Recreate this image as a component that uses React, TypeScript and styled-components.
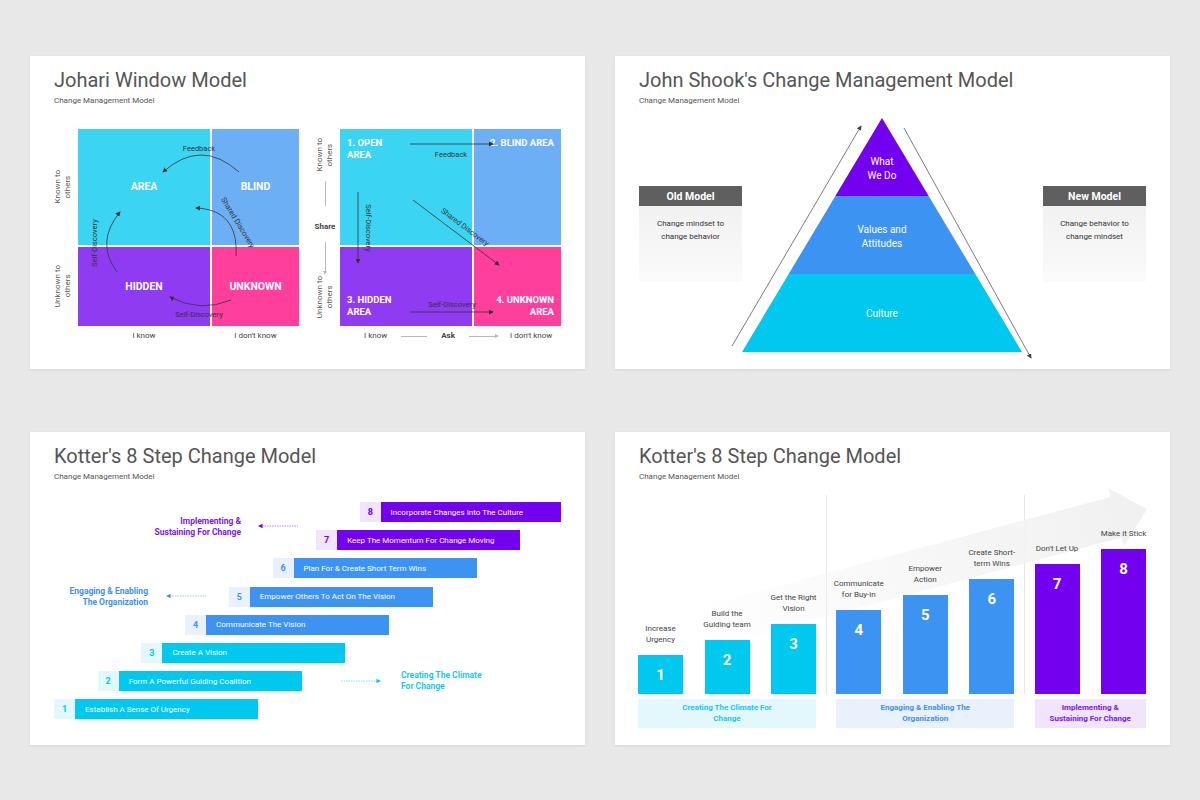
import { Fragment } from 'react';
import styled, { createGlobalStyle, css } from 'styled-components';

type Tone = 'cyan' | 'blue' | 'purple';

const tones: Record<Tone, { main: string; tint: string; text: string }> = {
  cyan: { main: '#00c8ef', tint: '#e3f8fd', text: '#1bc5ee' },
  blue: { main: '#3d93f2', tint: '#e8f1fc', text: '#3d8ff0' },
  purple: { main: '#7300ee', tint: '#f0e5fd', text: '#7a14f0' },
};

const GlobalStyle = createGlobalStyle`
  body {
    margin: 0;
    background: #e9e8e9;
    font-family: Roboto, 'Liberation Sans', sans-serif;
  }
`;

const Page = styled.div`
  width: 1200px;
  height: 800px;
  box-sizing: border-box;
  padding: 56px 30px 0;
  display: grid;
  grid-template-columns: 555px 555px;
  grid-template-rows: 313px 313px;
  column-gap: 30px;
  row-gap: 63px;
`;

const Slide = styled.section`
  position: relative;
  box-sizing: border-box;
  padding: 12px 24px 0;
  background: #fff;
  box-shadow: 0 1px 3px rgba(0, 0, 0, 0.08);
  overflow: hidden;
`;

const Title = styled.h1`
  margin: 0;
  font-size: 20px;
  line-height: 24px;
  font-weight: 400;
  color: #555;
  white-space: nowrap;
`;

const Subtitle = styled.p`
  margin: 4px 0 0;
  font-size: 8px;
  line-height: 10px;
  color: #555;
`;

/* ---------- Johari ---------- */

const Diagrams = styled.div`
  display: flex;
  gap: 11px;
  margin: 23px 0 0 -6px;
`;

const Johari = styled.div`
  display: flex;
  flex-direction: column;
`;

const JohariTop = styled.div`
  display: flex;
`;

const AxisCol = styled.div`
  width: 30px;
  display: flex;
  flex-direction: column;
  gap: 2px;
`;

const AxisCell = styled.div<{ $h: number }>`
  height: ${p => p.$h}px;
  display: flex;
  align-items: center;
  justify-content: center;
`;

const AxisStack = styled.div`
  width: 30px;
  box-sizing: border-box;
  padding-top: 9px;
  display: flex;
  flex-direction: column;
  align-items: center;
`;

const VText = styled.span<{ $mt?: number }>`
  margin-top: ${p => p.$mt ?? 0}px;
  writing-mode: vertical-rl;
  transform: rotate(180deg);
  font-size: 8px;
  line-height: 10px;
  color: #555;
  text-align: center;
  white-space: pre-line;
`;

const AxisWord = styled.span<{ $mt?: number }>`
  margin-top: ${p => p.$mt ?? 0}px;
  font-size: 8px;
  line-height: 10px;
  font-weight: 700;
  color: #444;
`;

const Rule = styled.span<{ $len: number; $vertical?: boolean; $arrow?: boolean; $mt?: number }>`
  position: relative;
  display: block;
  flex: none;
  margin-top: ${p => p.$mt ?? 0}px;
  background: #b8b8b8;
  width: ${p => (p.$vertical ? 1 : p.$len)}px;
  height: ${p => (p.$vertical ? p.$len : 1)}px;
  ${p =>
    p.$arrow &&
    (p.$vertical
      ? css`
          &::after {
            content: '';
            position: absolute;
            left: -2px;
            bottom: -3px;
            border-left: 2.5px solid transparent;
            border-right: 2.5px solid transparent;
            border-top: 4px solid #b8b8b8;
          }
        `
      : css`
          &::after {
            content: '';
            position: absolute;
            right: -3px;
            top: -2px;
            border-top: 2.5px solid transparent;
            border-bottom: 2.5px solid transparent;
            border-left: 4px solid #b8b8b8;
          }
        `)}
`;

const CellGrid = styled.div`
  position: relative;
  display: grid;
  grid-template-columns: 132px 87px;
  grid-template-rows: 116px 79px;
  gap: 2px;
`;

type Place = 'center' | 'tl' | 'tr' | 'bl' | 'br';

const placeStyles: Record<Place, ReturnType<typeof css>> = {
  center: css`
    align-items: center;
    justify-content: center;
    font-size: 10.5px;
  `,
  tl: css`
    align-items: flex-start;
    justify-content: flex-start;
    padding: 8px 7px;
  `,
  tr: css`
    align-items: flex-start;
    justify-content: flex-end;
    padding: 8px 7px;
  `,
  bl: css`
    align-items: flex-end;
    justify-content: flex-start;
    padding: 8px 7px;
  `,
  br: css`
    align-items: flex-end;
    justify-content: flex-end;
    text-align: right;
    padding: 8px 7px;
  `,
};

const Cell = styled.div<{ $bg: string; $place: Place }>`
  box-sizing: border-box;
  display: flex;
  background: ${p => p.$bg};
  color: #fff;
  font-weight: 700;
  font-size: 9.5px;
  line-height: 12px;
  white-space: pre-line;
  ${p => placeStyles[p.$place]}
`;

const Overlay = styled.svg`
  position: absolute;
  left: 0;
  top: 0;
  width: 100%;
  height: 100%;
  overflow: visible;
  pointer-events: none;
  font-family: Roboto, 'Liberation Sans', sans-serif;
`;

const BottomGrid = styled.div`
  margin: 5px 0 0 30px;
  display: grid;
  grid-template-columns: 132px 87px;
  gap: 2px;
  font-size: 8px;
  line-height: 10px;
  color: #444;
  text-align: center;
`;

const BottomFlow = styled.div`
  margin: 5px 0 0 30px;
  padding-left: 24px;
  display: flex;
  align-items: center;
  gap: 14px;
  font-size: 8px;
  line-height: 10px;
  color: #444;
`;

const Bold = styled.span`
  font-weight: 700;
`;

const JC = { cyan: '#3bd5f3', blue: '#6daff5', purple: '#8e3bf2', pink: '#ff3f9b' };

const ArrowMarker = ({ id, color = '#333' }: { id: string; color?: string }) => (
  <marker
    id={id}
    viewBox="0 0 6 6"
    refX="5"
    refY="3"
    markerWidth="5"
    markerHeight="5"
    markerUnits="userSpaceOnUse"
    orient="auto"
  >
    <path d="M0,0 L6,3 L0,6 z" fill={color} />
  </marker>
);

const JohariClassic = () => (
  <Johari>
    <JohariTop>
      <AxisCol>
        <AxisCell $h={116}>
          <VText>{'Known to\nothers'}</VText>
        </AxisCell>
        <AxisCell $h={79}>
          <VText>{'Unknown to\nothers'}</VText>
        </AxisCell>
      </AxisCol>
      <CellGrid>
        <Cell $bg={JC.cyan} $place="center">AREA</Cell>
        <Cell $bg={JC.blue} $place="center">BLIND</Cell>
        <Cell $bg={JC.purple} $place="center">HIDDEN</Cell>
        <Cell $bg={JC.pink} $place="center">UNKNOWN</Cell>
        <Overlay viewBox="0 0 221 197">
          <defs>
            <ArrowMarker id="jh-a" />
          </defs>
          <g fill="none" stroke="#333" strokeWidth="0.8" markerEnd="url(#jh-a)">
            <path d="M161,43 Q123,9 85,43" />
            <path d="M158,127 C160,95 145,80 118,79" />
            <path d="M39,143 Q17,113 42,83" />
            <path d="M153,171 Q122,184 92,168" />
          </g>
          <g fontSize="7.5" fill="#333" textAnchor="middle">
            <text x="121" y="22">Feedback</text>
            <text x="160" y="96" transform="rotate(58.5 160 93.5)">Shared Discovery</text>
            <text x="16" y="117" transform="rotate(-90 16 114)">Self-Discovery</text>
            <text x="121" y="188">Self-Discovery</text>
          </g>
        </Overlay>
      </CellGrid>
    </JohariTop>
    <BottomGrid>
      <span>I know</span>
      <span>I don't know</span>
    </BottomGrid>
  </Johari>
);

const JohariNumbered = () => (
  <Johari>
    <JohariTop>
      <AxisStack>
        <VText>{'Known to\nothers'}</VText>
        <Rule $vertical $len={25} $mt={10} />
        <AxisWord $mt={16}>Share</AxisWord>
        <Rule $vertical $arrow $len={30} $mt={10} />
        <VText $mt={4}>{'Unknown to\nothers'}</VText>
      </AxisStack>
      <CellGrid>
        <Cell $bg={JC.cyan} $place="tl">{'1. OPEN\nAREA'}</Cell>
        <Cell $bg={JC.blue} $place="tr">2. BLIND AREA</Cell>
        <Cell $bg={JC.purple} $place="bl">{'3. HIDDEN\nAREA'}</Cell>
        <Cell $bg={JC.pink} $place="br">{'4. UNKNOWN\nAREA'}</Cell>
        <Overlay viewBox="0 0 221 197">
          <defs>
            <ArrowMarker id="jh-b" />
          </defs>
          <g fill="none" stroke="#333" strokeWidth="0.8" markerEnd="url(#jh-b)">
            <path d="M70,15 L153,15" />
            <path d="M18,63 L18,134" />
            <path d="M73,71 L159,136" />
            <path d="M70,183 L153,183" />
          </g>
          <g fontSize="7.5" fill="#333" textAnchor="middle">
            <text x="111" y="27.5">Feedback</text>
            <text x="28" y="101.5" transform="rotate(90 28 99)">Self-Discovery</text>
            <text x="125" y="100.5" transform="rotate(37 125 98)">Shared Discovery</text>
            <text x="112" y="177.5">Self-Discovery</text>
          </g>
        </Overlay>
      </CellGrid>
    </JohariTop>
    <BottomFlow>
      <span>I know</span>
      <Rule $len={26} />
      <Bold>Ask</Bold>
      <Rule $len={27} $arrow />
      <span>I don't know</span>
    </BottomFlow>
  </Johari>
);

/* ---------- Shook ---------- */

const ShookBody = styled.div`
  display: grid;
  grid-template-columns: 103px 1fr 103px;
  align-items: center;
`;

const ModelBox = styled.div`
  display: flex;
  flex-direction: column;
`;

const ModelHead = styled.div`
  height: 20px;
  background: #5f5f5f;
  color: #fff;
  font-size: 10.5px;
  font-weight: 700;
  display: flex;
  align-items: center;
  justify-content: center;
`;

const ModelText = styled.div`
  height: 76px;
  box-sizing: border-box;
  padding-top: 11px;
  background: linear-gradient(180deg, #f1f1f1 0%, #fbfbfb 100%);
  color: #333;
  font-size: 8px;
  line-height: 13px;
  text-align: center;
  white-space: pre-line;
`;

const PyramidSvg = styled.svg`
  display: block;
  margin-top: 4px;
  width: 301px;
  height: 252px;
  overflow: visible;
  font-family: Roboto, 'Liberation Sans', sans-serif;
`;

const Pyramid = () => (
  <PyramidSvg viewBox="0 0 301 252">
    <defs>
      <ArrowMarker id="py-a" color="#444" />
    </defs>
    <polygon points="140,8 186.67,86 93.33,86" fill="#7300ee" />
    <polygon points="93.33,86 186.67,86 233.33,164 46.67,164" fill="#3d93f2" />
    <polygon points="46.67,164 233.33,164 280,242 0,242" fill="#00c8ef" />
    <g fill="none" stroke="#444" strokeWidth="0.7" markerEnd="url(#py-a)">
      <path d="M-10,236 L119,16" />
      <path d="M162,18 L289,248" />
    </g>
    <g fill="#fff" fontSize="10" textAnchor="middle">
      <text x="140" y="54.5">What</text>
      <text x="140" y="68.5">We Do</text>
      <text x="140" y="122.5">Values and</text>
      <text x="140" y="136.5">Attitudes</text>
      <text x="140" y="206.5">Culture</text>
    </g>
  </PyramidSvg>
);

/* ---------- Kotter steps ---------- */

const Steps = styled.div`
  position: relative;
  margin-top: 20px;
  display: flex;
  flex-direction: column;
  gap: 8.2px;
`;

const StepRow = styled.div<{ $indent: number }>`
  display: flex;
  padding-left: ${p => p.$indent}px;
`;

const StepNum = styled.div<{ $tone: Tone }>`
  width: 21px;
  height: 20px;
  display: flex;
  align-items: center;
  justify-content: center;
  background: ${p => tones[p.$tone].tint};
  color: ${p => tones[p.$tone].main};
  font-size: 9px;
  font-weight: 700;
`;

const StepBar = styled.div<{ $tone: Tone }>`
  width: 183px;
  height: 20px;
  box-sizing: border-box;
  padding-left: 10px;
  display: flex;
  align-items: center;
  background: ${p => tones[p.$tone].main};
  color: #fff;
  font-size: 8px;
  white-space: nowrap;
`;

const Note = styled.div<{ $tone: Tone; $align: 'left' | 'right' }>`
  position: absolute;
  font-size: 8.5px;
  line-height: 10.5px;
  font-weight: 700;
  white-space: pre;
  color: ${p => tones[p.$tone].text};
  text-align: ${p => p.$align};
`;

const NoteArrow = styled.svg`
  position: absolute;
  width: 40px;
  height: 6px;
  overflow: visible;
`;

const stepData: { n: number; text: string; tone: Tone }[] = [
  { n: 8, text: 'Incorporate Changes Into The Culture', tone: 'purple' },
  { n: 7, text: 'Keep The Momentum For Change Moving', tone: 'purple' },
  { n: 6, text: 'Plan For & Create Short Term Wins', tone: 'blue' },
  { n: 5, text: 'Empower Others To Act On The Vision', tone: 'blue' },
  { n: 4, text: 'Communicate The Vision', tone: 'blue' },
  { n: 3, text: 'Create A Vision', tone: 'cyan' },
  { n: 2, text: 'Form A Powerful Guiding Coalition', tone: 'cyan' },
  { n: 1, text: 'Establish A Sense Of Urgency', tone: 'cyan' },
];

const DashArrow = ({ tone, left, top, dir }: { tone: Tone; left: number; top: number; dir: 'l' | 'r' }) => {
  const c = tones[tone].main;
  return (
    <NoteArrow viewBox="0 0 40 6" style={{ left, top }}>
      {dir === 'l' ? (
        <>
          <line x1="4" y1="3" x2="40" y2="3" stroke={c} strokeWidth="0.8" strokeDasharray="1.5 1" opacity="0.6" />
          <path d="M0,3 L4.5,0.8 L4.5,5.2 z" fill={c} />
        </>
      ) : (
        <>
          <line x1="0" y1="3" x2="36" y2="3" stroke={c} strokeWidth="0.8" strokeDasharray="1.5 1" opacity="0.6" />
          <path d="M40,3 L35.5,0.8 L35.5,5.2 z" fill={c} />
        </>
      )}
    </NoteArrow>
  );
};

/* ---------- Kotter chart ---------- */

const Chart = styled.div`
  position: relative;
  margin-top: 13px;
  margin-left: -1px;
  display: flex;
`;

const ChartBack = styled.svg`
  position: absolute;
  left: 0;
  top: 0;
  width: 510px;
  height: 200px;
  overflow: visible;
  z-index: 0;
`;

const Group = styled.div`
  position: relative;
  z-index: 1;
  display: flex;
  flex-direction: column;
`;

const BarsRow = styled.div`
  height: 199px;
  display: flex;
  align-items: flex-end;
  gap: 21.5px;
`;

const BarCol = styled.div`
  width: 45px;
  display: flex;
  flex-direction: column;
  align-items: center;
`;

const BarLabel = styled.div`
  margin-bottom: 10px;
  font-size: 8px;
  line-height: 10.5px;
  color: #444;
  text-align: center;
  white-space: pre;
`;

const Bar = styled.div<{ $tone: Tone }>`
  width: 45px;
  box-sizing: border-box;
  padding-top: 12px;
  background: ${p => tones[p.$tone].main};
  color: #fff;
  font-size: 15px;
  line-height: 16px;
  font-weight: 700;
  text-align: center;
`;

const GroupLabel = styled.div<{ $tone: Tone }>`
  margin-top: 5px;
  height: 29px;
  display: flex;
  align-items: center;
  justify-content: center;
  background: ${p => tones[p.$tone].tint};
  color: ${p => tones[p.$tone].text};
  font-size: 8px;
  line-height: 10.5px;
  font-weight: 700;
  text-align: center;
  white-space: pre;
`;

const Divider = styled.div`
  width: 21px;
  height: 199px;
  display: flex;
  justify-content: center;

  &::before {
    content: '';
    width: 1px;
    background: #e8e8e8;
  }
`;

const chartGroups: { tone: Tone; label: string; bars: { n: number; label: string; h: number }[] }[] = [
  {
    tone: 'cyan',
    label: 'Creating The Climate For\nChange',
    bars: [
      { n: 1, label: 'Increase\nUrgency', h: 39 },
      { n: 2, label: 'Build the\nGuiding team', h: 54 },
      { n: 3, label: 'Get the Right\nVision', h: 70 },
    ],
  },
  {
    tone: 'blue',
    label: 'Engaging & Enabling The\nOrganization',
    bars: [
      { n: 4, label: 'Communicate\nfor Buy-in', h: 84 },
      { n: 5, label: 'Empower\nAction', h: 99 },
      { n: 6, label: 'Create Short-\nterm Wins', h: 115 },
    ],
  },
  {
    tone: 'purple',
    label: 'Implementing &\nSustaining For Change',
    bars: [
      { n: 7, label: "Don't Let Up", h: 130 },
      { n: 8, label: 'Make it Stick', h: 145 },
    ],
  },
];

const App = () => {
  return (
    <>
      <GlobalStyle />
      <Page>
        <Slide>
          <Title>Johari Window Model</Title>
          <Subtitle>Change Management Model</Subtitle>
          <Diagrams>
            <JohariClassic />
            <JohariNumbered />
          </Diagrams>
        </Slide>

        <Slide>
          <Title>John Shook's Change Management Model</Title>
          <Subtitle>Change Management Model</Subtitle>
          <ShookBody>
            <ModelBox>
              <ModelHead>Old Model</ModelHead>
              <ModelText>{'Change mindset to\nchange behavior'}</ModelText>
            </ModelBox>
            <Pyramid />
            <ModelBox>
              <ModelHead>New Model</ModelHead>
              <ModelText>{'Change behavior to\nchange mindset'}</ModelText>
            </ModelBox>
          </ShookBody>
        </Slide>

        <Slide>
          <Title>Kotter's 8 Step Change Model</Title>
          <Subtitle>Change Management Model</Subtitle>
          <Steps>
            {stepData.map(s => (
              <StepRow key={s.n} $indent={(s.n - 1) * 43.7}>
                <StepNum $tone={s.tone}>{s.n}</StepNum>
                <StepBar $tone={s.tone}>{s.text}</StepBar>
              </StepRow>
            ))}
            <Note $tone="purple" $align="right" style={{ right: 320, top: 14 }}>
              {'Implementing &\nSustaining For Change'}
            </Note>
            <DashArrow tone="purple" dir="l" left={204} top={21} />
            <Note $tone="blue" $align="right" style={{ right: 413, top: 84 }}>
              {'Engaging & Enabling\nThe Organization'}
            </Note>
            <DashArrow tone="blue" dir="l" left={112} top={91} />
            <Note $tone="cyan" $align="left" style={{ left: 347, top: 168 }}>
              {'Creating The Climate\nFor Change'}
            </Note>
            <DashArrow tone="cyan" dir="r" left={287} top={176} />
          </Steps>
        </Slide>

        <Slide>
          <Title>Kotter's 8 Step Change Model</Title>
          <Subtitle>Change Management Model</Subtitle>
          <Chart>
            <ChartBack viewBox="0 0 510 200">
              <defs>
                <linearGradient id="bg-arrow" gradientUnits="userSpaceOnUse" x1="-470" y1="0" x2="0" y2="0">
                  <stop offset="0" stopColor="#f5f5f5" stopOpacity="0" />
                  <stop offset="0.55" stopColor="#f5f5f5" stopOpacity="0.85" />
                  <stop offset="1" stopColor="#f0f0f0" stopOpacity="1" />
                </linearGradient>
              </defs>
              <g transform="translate(509 14) rotate(-15)">
                <polygon
                  points="-470,-21 -32,-21 -32,-30 0,0 -32,30 -32,21 -470,21"
                  fill="url(#bg-arrow)"
                />
              </g>
            </ChartBack>
            {chartGroups.map((g, gi) => (
              <Fragment key={g.tone}>
                {gi > 0 && <Divider />}
                <Group>
                  <BarsRow>
                    {g.bars.map(b => (
                      <BarCol key={b.n}>
                        <BarLabel>{b.label}</BarLabel>
                        <Bar $tone={g.tone} style={{ height: b.h }}>
                          {b.n}
                        </Bar>
                      </BarCol>
                    ))}
                  </BarsRow>
                  <GroupLabel $tone={g.tone}>{g.label}</GroupLabel>
                </Group>
              </Fragment>
            ))}
          </Chart>
        </Slide>
      </Page>
    </>
  );
};

export default App;
